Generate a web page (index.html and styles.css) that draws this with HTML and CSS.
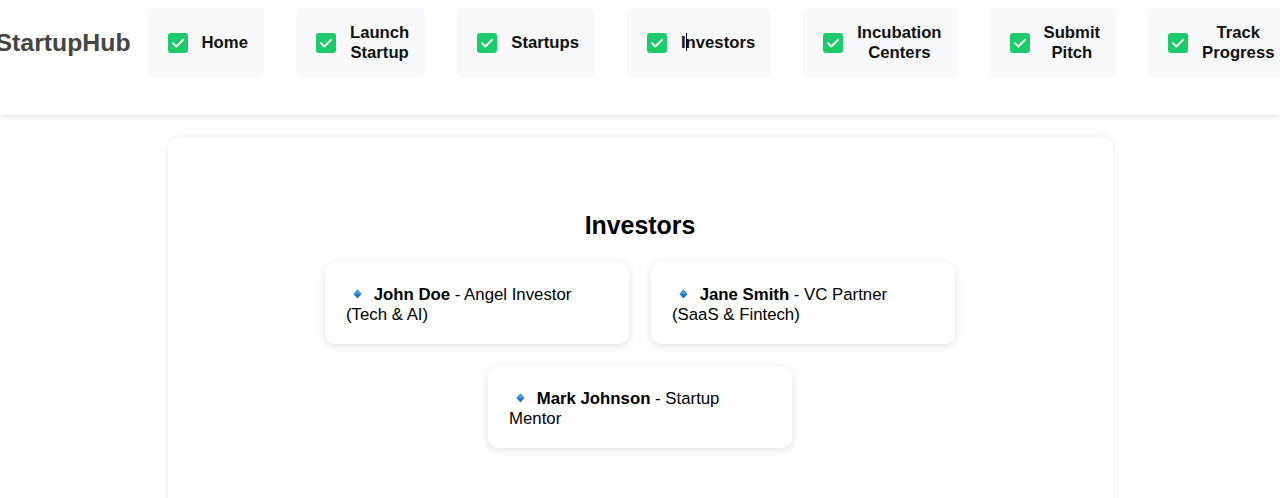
FILE: index.html
```html
<!DOCTYPE html>
<html lang="en">
<head>
<meta charset="utf-8">
<title>StartupHub</title>
<link rel="stylesheet" href="styles.css">
</head>
<body>
<header class="site-header">
  <div class="logo">StartupHub</div>
  <nav class="nav">
    <a class="nav-item"><svg class="check" viewBox="0 0 20 20"><rect width="20" height="20" rx="3" fill="#1ecb6a"/><path d="M5 10.2l3.3 3.3L15 6.8" fill="none" stroke="#fff" stroke-width="1.8" stroke-linecap="round" stroke-linejoin="round"/></svg><span class="label">Home</span></a>
    <a class="nav-item"><svg class="check" viewBox="0 0 20 20"><rect width="20" height="20" rx="3" fill="#1ecb6a"/><path d="M5 10.2l3.3 3.3L15 6.8" fill="none" stroke="#fff" stroke-width="1.8" stroke-linecap="round" stroke-linejoin="round"/></svg><span class="label">Launch Startup</span></a>
    <a class="nav-item"><svg class="check" viewBox="0 0 20 20"><rect width="20" height="20" rx="3" fill="#1ecb6a"/><path d="M5 10.2l3.3 3.3L15 6.8" fill="none" stroke="#fff" stroke-width="1.8" stroke-linecap="round" stroke-linejoin="round"/></svg><span class="label">Startups</span></a>
    <a class="nav-item"><svg class="check" viewBox="0 0 20 20"><rect width="20" height="20" rx="3" fill="#1ecb6a"/><path d="M5 10.2l3.3 3.3L15 6.8" fill="none" stroke="#fff" stroke-width="1.8" stroke-linecap="round" stroke-linejoin="round"/></svg><span class="label nowrap">I<span class="caret"></span>nvestors</span></a>
    <a class="nav-item"><svg class="check" viewBox="0 0 20 20"><rect width="20" height="20" rx="3" fill="#1ecb6a"/><path d="M5 10.2l3.3 3.3L15 6.8" fill="none" stroke="#fff" stroke-width="1.8" stroke-linecap="round" stroke-linejoin="round"/></svg><span class="label">Incubation Centers</span></a>
    <a class="nav-item"><svg class="check" viewBox="0 0 20 20"><rect width="20" height="20" rx="3" fill="#1ecb6a"/><path d="M5 10.2l3.3 3.3L15 6.8" fill="none" stroke="#fff" stroke-width="1.8" stroke-linecap="round" stroke-linejoin="round"/></svg><span class="label">Submit Pitch</span></a>
    <a class="nav-item"><svg class="check" viewBox="0 0 20 20"><rect width="20" height="20" rx="3" fill="#1ecb6a"/><path d="M5 10.2l3.3 3.3L15 6.8" fill="none" stroke="#fff" stroke-width="1.8" stroke-linecap="round" stroke-linejoin="round"/></svg><span class="label">Track Progress</span></a>
  </nav>
</header>

<main class="content">
  <section class="panel">
    <h2 class="panel-title">Investors</h2>
    <div class="investors">
      <div class="investor"><svg class="gem" viewBox="0 0 23 10"><polygon points="11.5,0.5 15.5,5 11.5,9.5 7.5,5" fill="#1f74c4"/><polygon points="11.5,0.5 15.5,5 11.5,5 7.5,5" fill="#4a98da"/></svg> <b>John Doe</b> - Angel Investor (Tech &amp; AI)</div>
      <div class="investor"><svg class="gem" viewBox="0 0 23 10"><polygon points="11.5,0.5 15.5,5 11.5,9.5 7.5,5" fill="#1f74c4"/><polygon points="11.5,0.5 15.5,5 11.5,5 7.5,5" fill="#4a98da"/></svg> <b>Jane Smith</b> - VC Partner (SaaS &amp; Fintech)</div>
      <div class="investor"><svg class="gem" viewBox="0 0 23 10"><polygon points="11.5,0.5 15.5,5 11.5,9.5 7.5,5" fill="#1f74c4"/><polygon points="11.5,0.5 15.5,5 11.5,5 7.5,5" fill="#4a98da"/></svg> <b>Mark Johnson</b> - Startup Mentor</div>
    </div>
  </section>
</main>
</body>
</html>
```

FILE: styles.css
```css
* { box-sizing: border-box; }

body {
  margin: 0;
  background: #ffffff;
  font-family: "Liberation Sans", Arial, sans-serif;
  color: #000;
}

.site-header {
  display: flex;
  justify-content: center;
  align-items: center;
  padding: 7px 0 37px 6px;
  background: #fff;
  box-shadow: 0 2px 5px rgba(0, 0, 0, 0.1);
  overflow: hidden;
}

.logo {
  flex-shrink: 0;
  font-size: 24.8px;
  font-weight: bold;
  color: #444;
  margin-right: 17px;
  white-space: nowrap;
}

.nav {
  display: flex;
  gap: 32px;
}

.nav-item {
  display: flex;
  align-items: center;
  height: 71px;
  padding: 0 16px 0 20px;
  background: #f8f9fa;
  border-radius: 6px;
  color: #111;
  text-decoration: none;
}

.check {
  flex-shrink: 0;
  width: 20px;
  height: 20px;
  margin-right: 14px;
}

.label {
  font-size: 16.7px;
  font-weight: bold;
  line-height: 20px;
  text-align: center;
}

.nowrap {
  white-space: nowrap;
}

.caret {
  display: inline-block;
  width: 0;
  height: 18px;
  border-left: 1px solid #000;
  margin-right: -1px;
  vertical-align: -3px;
}

.content {
  display: flex;
  justify-content: center;
  padding-top: 22px;
}

.panel {
  width: 945px;
  min-height: 400px;
  padding: 74px 40px 40px;
  background: #fff;
  border-radius: 12px;
  box-shadow: 0 0 10px rgba(0, 0, 0, 0.08);
}

.panel-title {
  margin: 0 0 23px;
  font-size: 24.9px;
  line-height: 28px;
  font-weight: bold;
  text-align: center;
}

.investors {
  display: flex;
  flex-wrap: wrap;
  justify-content: center;
  gap: 22px;
}

.investor {
  width: 304px;
  padding: 23px 21px 19px;
  background: #fff;
  border-radius: 10px;
  box-shadow: 0 2px 8px rgba(0, 0, 0, 0.12);
  font-size: 16.8px;
  line-height: 20px;
}

.gem {
  display: inline-block;
  width: 23px;
  height: 10px;
  vertical-align: 1px;
}
```
